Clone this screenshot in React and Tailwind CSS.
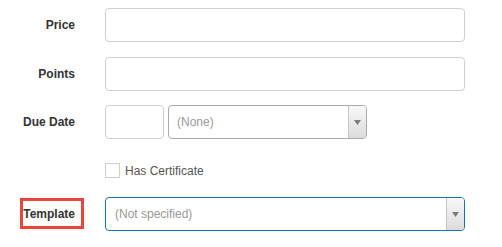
import React from 'react';

const Arrow = () => (
  <div className="w-[18px] h-full flex items-center justify-center border-l border-[#c4c4c4] bg-gradient-to-b from-[#f8f8f8] to-[#dcdcdc] rounded-r-[3px]">
    <svg width="7" height="5" viewBox="0 0 7 5">
      <path d="M0 0 L7 0 L3.5 5 Z" fill="#7a7a7a" />
    </svg>
  </div>
);

const Label = ({ children }) => (
  <div className="w-[75px] shrink-0 text-right font-bold text-[12px] text-[#333]">{children}</div>
);

export default function App() {
  return (
    <div className="w-[502px] h-[247px] bg-white pt-[8px]" style={{ fontFamily: '"Liberation Sans", Arial, sans-serif' }}>
      <div className="flex items-center h-[34px]">
        <Label>Price</Label>
        <div className="ml-[30px] w-[360px] h-[34px] border border-[#cfcfcf] rounded-[4px]" />
      </div>

      <div className="flex items-center h-[34px] mt-[15px]">
        <Label>Points</Label>
        <div className="ml-[30px] w-[360px] h-[34px] border border-[#cfcfcf] rounded-[4px]" />
      </div>

      <div className="flex items-center h-[34px] mt-[14px]">
        <Label>Due Date</Label>
        <div className="ml-[30px] w-[59px] h-[34px] border border-[#cfcfcf] rounded-[4px]" />
        <div className="ml-[4px] w-[199px] h-[34px] border border-[#aaa] rounded-[4px] flex items-center">
          <span className="flex-1 pl-[8px] text-[12px] text-[#999]">(None)</span>
          <Arrow />
        </div>
      </div>

      <div className="flex items-center h-[15px] mt-[24px] pl-[105px]">
        <div className="w-[15px] h-[15px] border border-[#cfcfcf]" />
        <span className="ml-[5px] text-[12px] text-[#555]">Has Certificate</span>
      </div>

      <div className="flex items-center h-[34px] mt-[19px]">
        <div className="w-[75px] shrink-0 text-right font-bold text-[12px] text-[#333]">
          <span className="relative">
            Template
            <span className="absolute left-[-3px] right-[-9px] top-[-9px] bottom-[-8px] border-[3px] border-[#e8453c]" />
          </span>
        </div>
        <div className="ml-[30px] w-[360px] h-[34px] border border-[#1a73b8] rounded-[4px] flex items-center">
          <span className="flex-1 pl-[9px] text-[12px] text-[#999]">(Not specified)</span>
          <Arrow />
        </div>
      </div>
    </div>
  );
}
